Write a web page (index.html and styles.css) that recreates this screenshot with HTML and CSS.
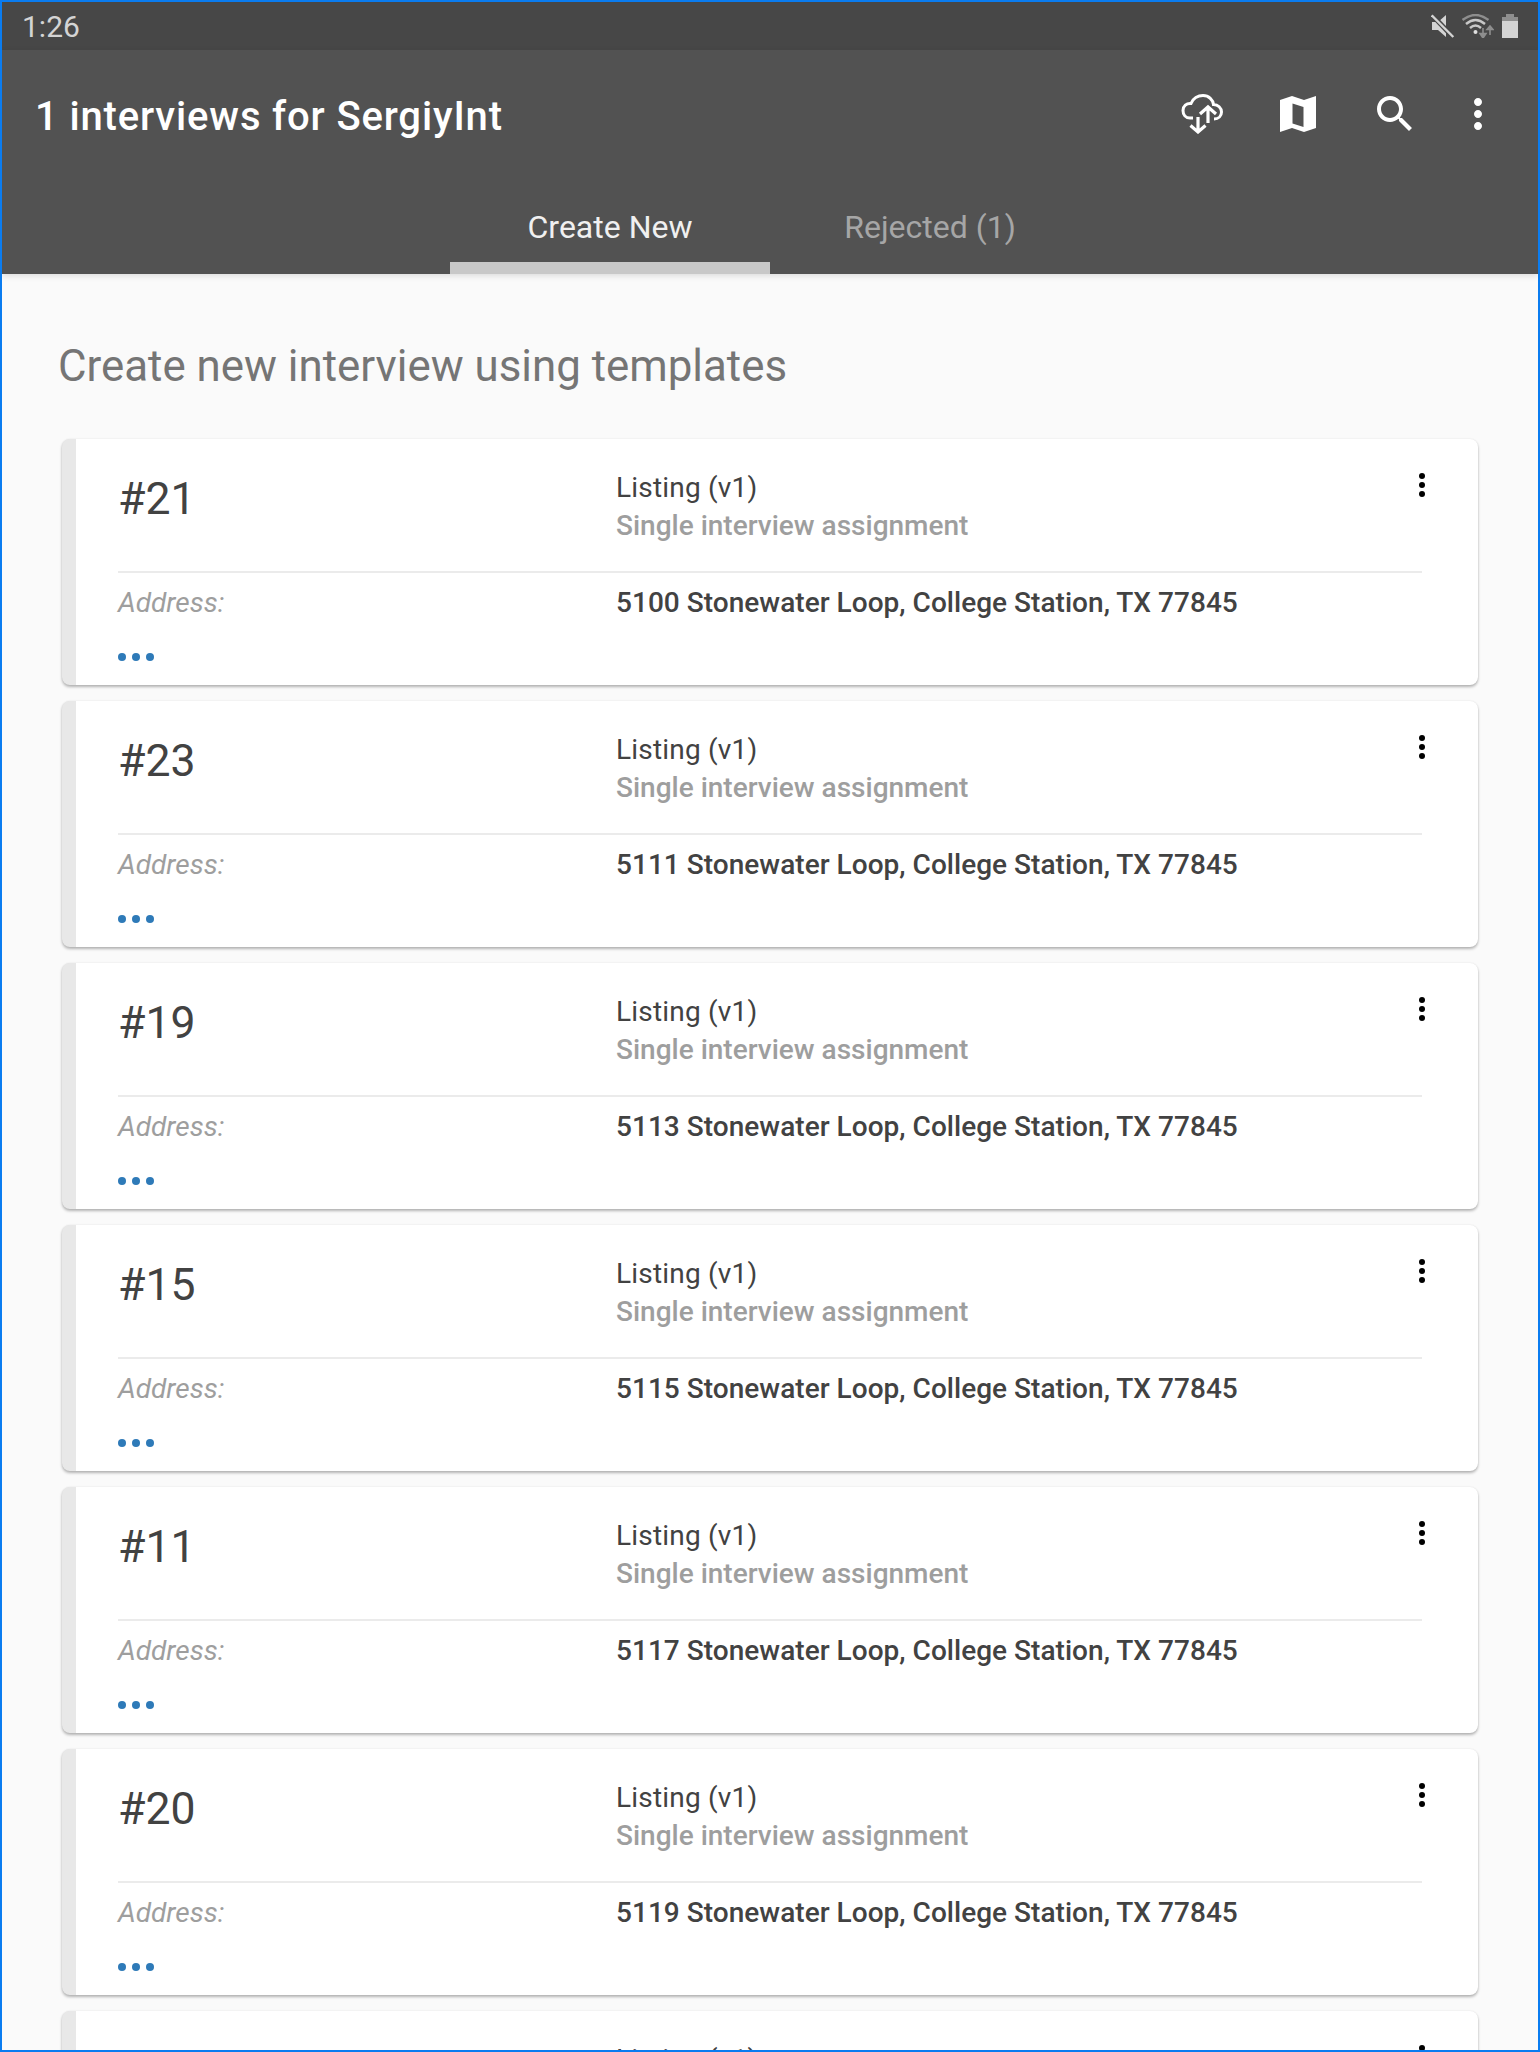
FILE: index.html
```html
<!DOCTYPE html>
<html lang="en">
  <head>
    <meta charset="UTF-8" />
    <title>Interviews</title>
    <link rel="stylesheet" href="styles.css">
  </head>

  <body>
    <div class="status-bar">
      <span class="clock">1:26</span>
      <div class="status-icons">
        <svg class="icon-mute" viewBox="0 0 24 24" width="24" height="24"><path d="M1 8H7L15 1V23L7 16H1Z" fill="#d4d4d4"/><path d="M0 0 23 24" stroke="#474747" stroke-width="5" fill="none"/><path d="M0.700 1.300 22.300 23" stroke="#d4d4d4" stroke-width="2.400" fill="none"/></svg>
        <svg class="icon-wifi" viewBox="0 0 32 24" width="32" height="24"><path d="M0.500 6Q13.500-4 26.500 6" stroke="#8e8e8e" stroke-width="2.400" fill="none"/><path d="M4 10Q13.500 2 23 10" stroke="#c8c8c8" stroke-width="2.400" fill="none"/><path d="M8 14Q13.500 9 19 14" stroke="#c8c8c8" stroke-width="2.400" fill="none"/><circle cx="13.500" cy="18" r="2" fill="#e0e0e0"/><path d="M21 14V20M18 19.500 21 24 24 19.500Z" stroke="#8e8e8e" stroke-width="1.600" fill="#8e8e8e"/><path d="M28 21V15M25 15.500 28 12 31 15.500Z" stroke="#8e8e8e" stroke-width="1.600" fill="#8e8e8e"/></svg>
        <div class="battery"><span class="battery-cap"></span><span class="battery-body"></span></div>
      </div>
    </div>

    <header class="toolbar">
      <div class="toolbar-top">
        <h1 class="title">1 interviews for SergiyInt</h1>
        <div class="actions">
          <svg class="action-sync" viewBox="0 0 44 40" width="44" height="40"><path d="M13 24H10C5.500 24 3 20.500 3 16.500C3 12 6.500 9 11 9.500C13 4.500 18 1.500 23 1.500C29 1.500 33 6 33.500 10.500C38 10.500 41.500 14 41.500 18C41.500 22 38.500 25 34 25" fill="none" stroke="#fff" stroke-width="3"/><path d="M28 29V13M20 20 28 13 36 20" fill="none" stroke="#fff" stroke-width="3.200"/><path d="M18 23V38M10.500 31.500 18 38 25.500 31.500" fill="none" stroke="#fff" stroke-width="3.200"/></svg>
          <svg class="action-map" viewBox="0 0 36 36" width="36" height="36"><path fill-rule="evenodd" fill="#fff" d="M0 4 12 0 24 4 36 0V32L24 36 12 32 0 36ZM12.500 7.500V27.500L23.500 31V11Z"/></svg>
          <svg class="action-search" viewBox="0 0 24 24" width="48" height="48"><path fill="#fff" d="M15.500 14h-.79l-.28-.27C15.410 12.590 16 11.110 16 9.500 16 5.910 13.090 3 9.500 3S3 5.910 3 9.500 5.910 16 9.500 16c1.610 0 3.090-.59 4.230-1.570l.27.28v.79l5 4.990L20.490 19l-4.990-5zm-6 0C7.010 14 5 11.990 5 9.500S7.010 5 9.500 5 14 7.010 14 9.500 11.990 14 9.500 14z"/></svg>
          <svg class="action-more" viewBox="0 0 24 24" width="48" height="48"><path fill="#fff" d="M12 8c1.100 0 2-.9 2-2s-.9-2-2-2-2 .9-2 2 .9 2 2 2zm0 2c-1.100 0-2 .9-2 2s.9 2 2 2 2-.9 2-2-.9-2-2-2zm0 6c-1.100 0-2 .9-2 2s.9 2 2 2 2-.9 2-2-.9-2-2-2z"/></svg>
        </div>
      </div>
      <nav class="tabs">
        <a class="tab tab-active">Create New</a>
        <a class="tab">Rejected (1)</a>
      </nav>
    </header>

    <main class="content">
      <h2 class="heading">Create new interview using templates</h2>

      <div class="card-list">
        <article class="card">
          <div class="card-top">
            <div class="card-number">#21</div>
            <div class="card-info">
              <div class="card-name">Listing (v1)</div>
              <div class="card-type">Single interview assignment</div>
            </div>
            <div class="card-menu"><i></i><i></i><i></i></div>
          </div>
          <div class="card-row">
            <div class="card-label">Address:</div>
            <div class="card-value">5100 Stonewater Loop, College Station, TX 77845</div>
          </div>
          <div class="card-dots"><i></i><i></i><i></i></div>
        </article>

        <article class="card">
          <div class="card-top">
            <div class="card-number">#23</div>
            <div class="card-info">
              <div class="card-name">Listing (v1)</div>
              <div class="card-type">Single interview assignment</div>
            </div>
            <div class="card-menu"><i></i><i></i><i></i></div>
          </div>
          <div class="card-row">
            <div class="card-label">Address:</div>
            <div class="card-value">5111 Stonewater Loop, College Station, TX 77845</div>
          </div>
          <div class="card-dots"><i></i><i></i><i></i></div>
        </article>

        <article class="card">
          <div class="card-top">
            <div class="card-number">#19</div>
            <div class="card-info">
              <div class="card-name">Listing (v1)</div>
              <div class="card-type">Single interview assignment</div>
            </div>
            <div class="card-menu"><i></i><i></i><i></i></div>
          </div>
          <div class="card-row">
            <div class="card-label">Address:</div>
            <div class="card-value">5113 Stonewater Loop, College Station, TX 77845</div>
          </div>
          <div class="card-dots"><i></i><i></i><i></i></div>
        </article>

        <article class="card">
          <div class="card-top">
            <div class="card-number">#15</div>
            <div class="card-info">
              <div class="card-name">Listing (v1)</div>
              <div class="card-type">Single interview assignment</div>
            </div>
            <div class="card-menu"><i></i><i></i><i></i></div>
          </div>
          <div class="card-row">
            <div class="card-label">Address:</div>
            <div class="card-value">5115 Stonewater Loop, College Station, TX 77845</div>
          </div>
          <div class="card-dots"><i></i><i></i><i></i></div>
        </article>

        <article class="card">
          <div class="card-top">
            <div class="card-number">#11</div>
            <div class="card-info">
              <div class="card-name">Listing (v1)</div>
              <div class="card-type">Single interview assignment</div>
            </div>
            <div class="card-menu"><i></i><i></i><i></i></div>
          </div>
          <div class="card-row">
            <div class="card-label">Address:</div>
            <div class="card-value">5117 Stonewater Loop, College Station, TX 77845</div>
          </div>
          <div class="card-dots"><i></i><i></i><i></i></div>
        </article>

        <article class="card">
          <div class="card-top">
            <div class="card-number">#20</div>
            <div class="card-info">
              <div class="card-name">Listing (v1)</div>
              <div class="card-type">Single interview assignment</div>
            </div>
            <div class="card-menu"><i></i><i></i><i></i></div>
          </div>
          <div class="card-row">
            <div class="card-label">Address:</div>
            <div class="card-value">5119 Stonewater Loop, College Station, TX 77845</div>
          </div>
          <div class="card-dots"><i></i><i></i><i></i></div>
        </article>

        <article class="card">
          <div class="card-top">
            <div class="card-number"></div>
            <div class="card-info">
              <div class="card-name">Listing (v1)</div>
              <div class="card-type">Single interview assignment</div>
            </div>
            <div class="card-menu"><i></i><i></i><i></i></div>
          </div>
        </article>
      </div>
    </main>
  </body>
</html>
```

FILE: styles.css
```css
html,
body {
  margin: 0;
  padding: 0;
}

body {
  width: 1540px;
  height: 2052px;
  box-sizing: border-box;
  border: 2px solid #0a7cf0;
  overflow: hidden;
  background-color: #fafafa;
  font-family: Roboto, "Liberation Sans", sans-serif;
}

.status-bar {
  height: 48px;
  background-color: #474747;
  display: flex;
  align-items: center;
  justify-content: space-between;
  padding: 0 20px;
}

.clock {
  font-size: 30px;
  color: #d4d4d4;
}

.status-icons {
  display: flex;
  align-items: center;
  gap: 7px;
}

.icon-wifi {
  margin-right: 1px;
}

.battery {
  display: flex;
  flex-direction: column;
  align-items: center;
  width: 16px;
}

.battery-cap {
  width: 8px;
  height: 3px;
  background-color: #8e8e8e;
}

.battery-body {
  width: 16px;
  height: 21px;
  background-color: #d4d4d4;
  border-top: 4px solid #8e8e8e;
  box-sizing: border-box;
}

.toolbar {
  height: 224px;
  background-color: #525252;
  box-shadow: 0 2px 6px rgba(0, 0, 0, 0.12);
  position: relative;
}

.toolbar-top {
  height: 148px;
  display: flex;
  align-items: flex-start;
  justify-content: space-between;
  padding: 0 36px 0 33px;
}

.title {
  margin: 43px 0 0;
  font-size: 40px;
  font-weight: 500;
  line-height: 48px;
  letter-spacing: 0.85px;
  color: #fff;
}

.actions {
  display: flex;
  align-items: center;
  margin-top: 40px;
}

.action-sync {
  margin-right: 56px;
}

.action-map {
  margin-right: 55px;
}

.action-search {
  margin-right: 35px;
}

.tabs {
  height: 76px;
  display: flex;
  padding-left: 448px;
}

.tab {
  width: 320px;
  box-sizing: border-box;
  height: 76px;
  padding-top: 7px;
  text-align: center;
  font-size: 32px;
  line-height: 44px;
  color: #a6a6a6;
}

.tab-active {
  color: #f0f0f0;
  border-bottom: 12px solid #c8c8c8;
}

.content {
  padding: 66px 60px 0 56px;
}

.heading {
  margin: 0 0 47px 0;
  font-size: 43.85px;
  font-weight: 400;
  line-height: 52px;
  color: #757575;
}

.card-list {
  display: flex;
  flex-direction: column;
  gap: 16px;
  margin-left: 4px;
}

.card {
  height: 246px;
  flex-shrink: 0;
  box-sizing: border-box;
  background-color: #fff;
  border-left: 14px solid #e8e8e8;
  border-radius: 8px;
  box-shadow: 0 2px 3px rgba(0, 0, 0, 0.28), 0 0 2px rgba(0, 0, 0, 0.08);
  padding: 0 56px 0 42px;
  color: #424242;
}

.card-top {
  height: 132px;
  display: flex;
  border-bottom: 2px solid #ebebeb;
}

.card-number {
  width: 498px;
  font-size: 44.5px;
  line-height: 56px;
  padding-top: 32px;
}

.card-info {
  flex: 1;
  padding-top: 30px;
  font-size: 28px;
  line-height: 38px;
}

.card-name {
  letter-spacing: 0.2px;
}

.card-type {
  color: #9e9e9e;
  font-weight: 500;
}

.card-menu {
  display: flex;
  flex-direction: column;
  gap: 3px;
  padding-top: 34px;
  margin-right: -3px;
}

.card-menu i {
  display: block;
  width: 6px;
  height: 6px;
  border-radius: 50%;
  background-color: #000;
}

.card-row {
  display: flex;
  font-size: 28px;
  line-height: 38px;
  padding-top: 11px;
}

.card-label {
  width: 498px;
  font-style: italic;
  color: #9e9e9e;
}

.card-value {
  font-weight: 500;
  letter-spacing: 0.03px;
}

.card-dots {
  display: flex;
  gap: 6px;
  padding-top: 31px;
}

.card-dots i {
  display: block;
  width: 8px;
  height: 8px;
  border-radius: 50%;
  background-color: #2e7ab8;
}
```
